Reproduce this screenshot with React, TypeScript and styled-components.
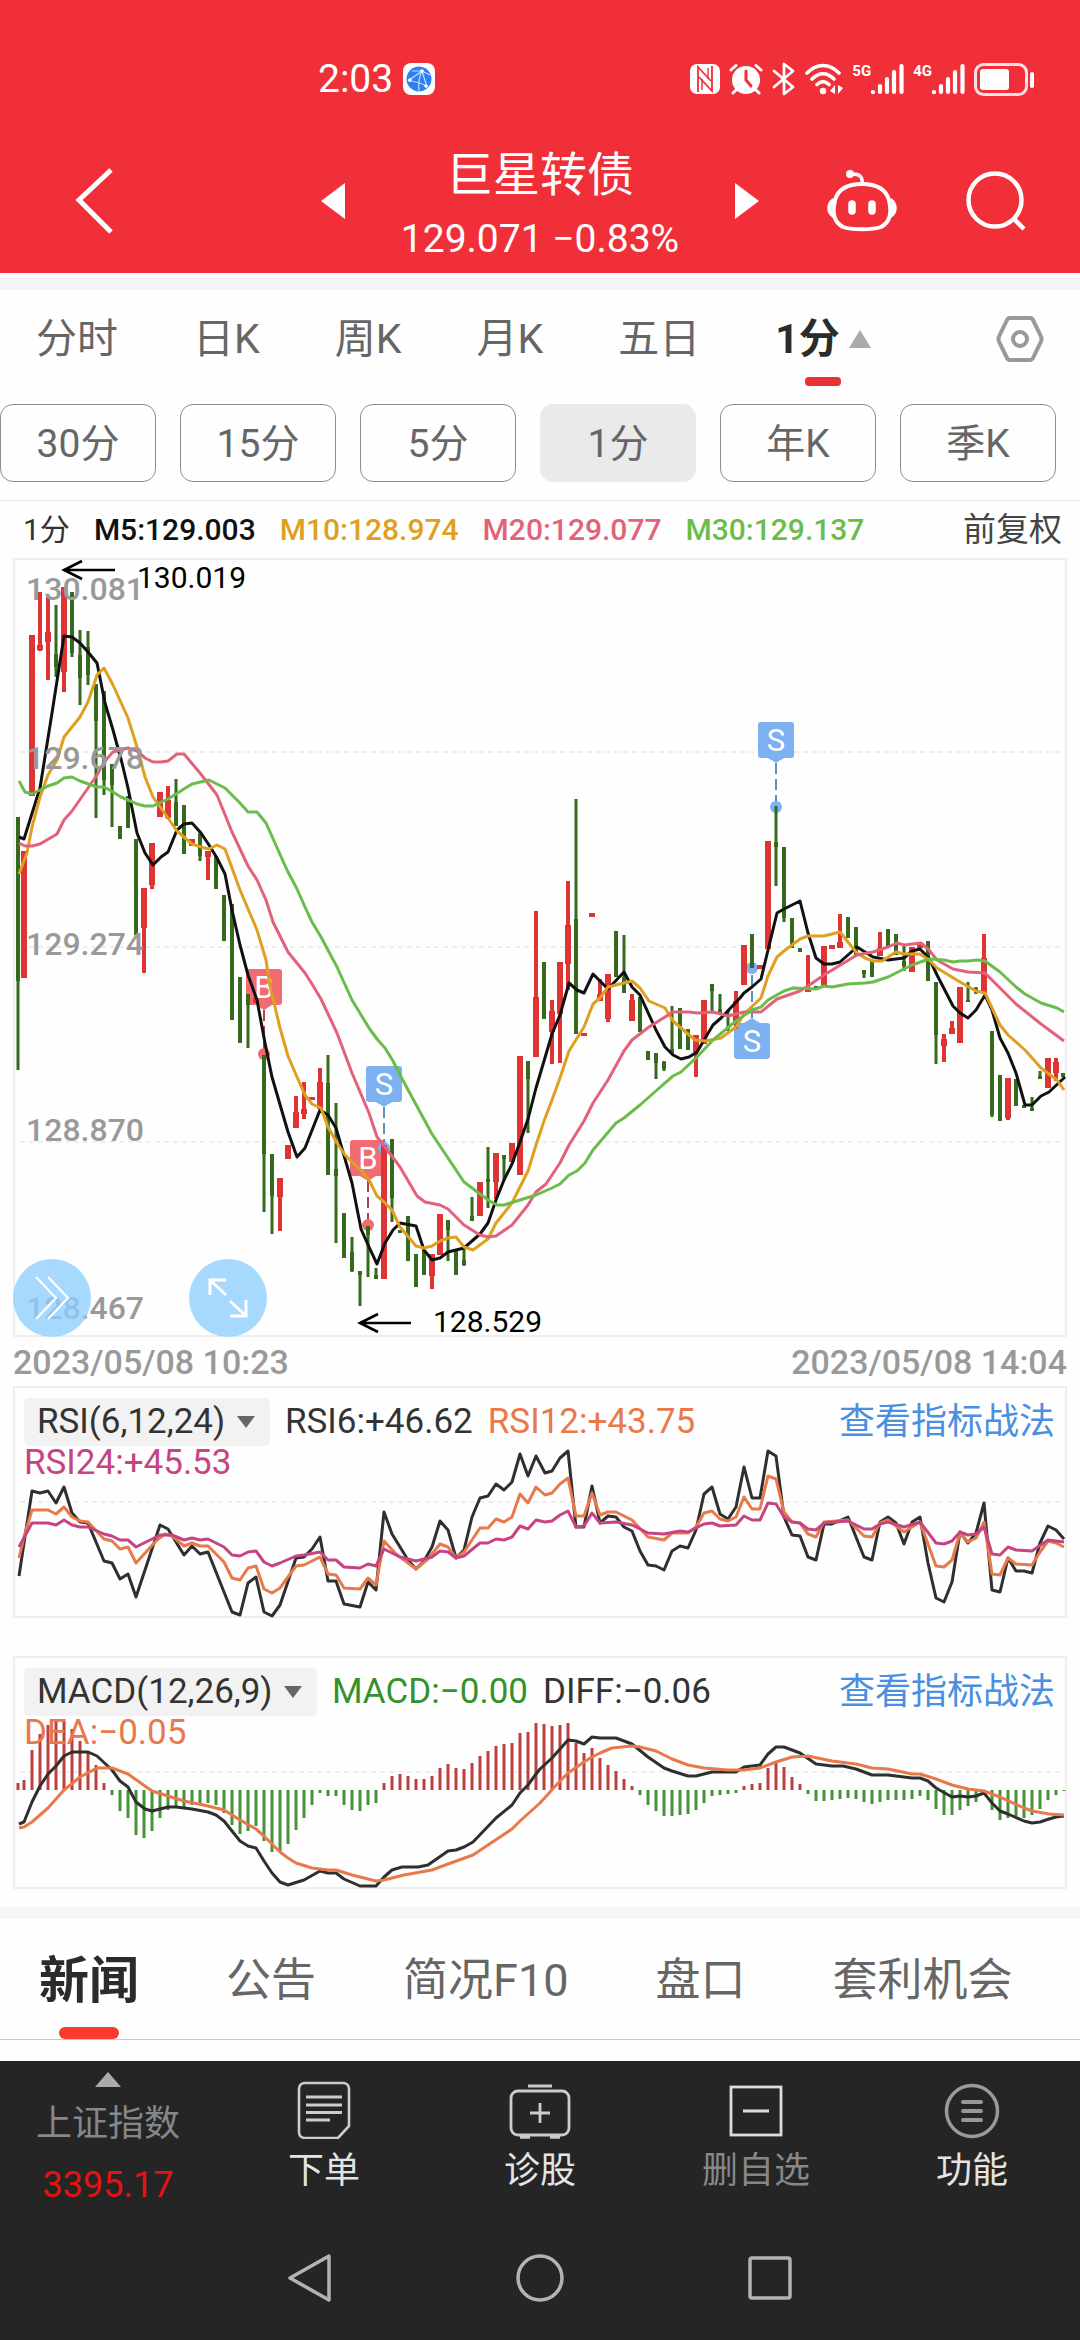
import React from 'react';
import styled, { createGlobalStyle } from 'styled-components';

const fontStack = "Roboto, 'Noto Sans CJK SC', sans-serif";

const GlobalStyle = createGlobalStyle`
  * { box-sizing: border-box; }
  body {
    margin: 0;
    background: #fefefe;
    font-family: ${fontStack};
    color: #333;
  }
  button, select { font-family: inherit; }
  svg text { font-family: ${fontStack}; }
`;

const IconButton = styled.button`
  display: flex;
  align-items: center;
  justify-content: center;
  margin: 0;
  padding: 0;
  border: 0;
  background: none;
  color: inherit;
`;

/* ---------- header ---------- */

const Header = styled.header`
  background: #f12f38;
  color: #fff;
`;

const StatusBar = styled.div`
  display: flex;
  align-items: center;
  justify-content: space-between;
  height: 128px;
  padding: 30px 45px 0 318px;
`;

const Clock = styled.div`
  display: flex;
  align-items: center;
  gap: 10px;
  font-size: 39px;
  line-height: 48px;
`;

const StatusIcons = styled.div`
  display: flex;
  align-items: center;
  gap: 9px;
`;

const Signal = styled.div`
  display: flex;
  align-items: flex-start;
  height: 32px;
`;

const SignalLabel = styled.span`
  font-size: 15px;
  line-height: 16px;
  font-weight: 700;
`;

const TitleBar = styled.div`
  display: grid;
  grid-template-columns: 1fr 438px 1fr;
  align-items: center;
  height: 145px;
`;

const BackButton = styled(IconButton)`
  justify-self: start;
  margin-left: 74px;
`;

const StockSwitcher = styled.div`
  display: flex;
  align-items: center;
  justify-content: space-between;
`;

const StockTitle = styled.div`
  padding-top: 12px;
  text-align: center;
`;

const StockName = styled.h1`
  margin: 0;
  font-size: 47px;
  line-height: 64px;
  font-weight: 400;
`;

const StockQuote = styled.p`
  margin: 0;
  font-size: 39px;
  line-height: 64px;
`;

const HeaderActions = styled.div`
  display: flex;
  align-items: center;
  justify-content: flex-end;
  gap: 68px;
  padding-right: 53px;
`;

/* ---------- period selection ---------- */

const Band = styled.div<{ $top?: number }>`
  height: 12px;
  margin-top: ${(p) => p.$top ?? 0}px;
  background: #f5f5f7;
`;

const PeriodTabs = styled.nav`
  display: flex;
  align-items: flex-start;
  gap: 75px;
  height: 114px;
  padding: 19px 36px 0;
`;

const PeriodTab = styled.button<{ $active?: boolean }>`
  display: flex;
  flex-direction: column;
  align-items: center;
  gap: 8px;
  padding: 0;
  border: 0;
  background: none;
  color: ${(p) => (p.$active ? '#2b2b2b' : '#666')};
  font-size: 41px;
  line-height: 60px;
  font-weight: ${(p) => (p.$active ? 700 : 400)};
  white-space: nowrap;

  &::after {
    content: '';
    width: 36px;
    height: 9px;
    border-radius: 4px;
    background: ${(p) => (p.$active ? '#e93037' : 'transparent')};
  }
`;

const TabLabel = styled.span`
  display: flex;
  align-items: center;
  gap: 8px;
`;

const SettingsButton = styled(IconButton)`
  height: 60px;
  margin-left: auto;
`;

const Chips = styled.div`
  display: grid;
  grid-template-columns: repeat(6, 1fr);
  gap: 24px;
  padding: 0 24px 18px 0;
  border-bottom: 1px solid #e6e6e6;
`;

const Chip = styled.button<{ $active?: boolean }>`
  height: 78px;
  padding: 2px 0 0;
  border: 1px solid ${(p) => (p.$active ? '#eaeaea' : '#8c8c8c')};
  border-radius: 13px;
  background: ${(p) => (p.$active ? '#eaeaea' : '#fefefe')};
  color: #666;
  font-size: 39px;
  line-height: 56px;
`;

/* ---------- charts ---------- */

const MaRow = styled.div`
  display: flex;
  align-items: center;
  gap: 24px;
  height: 57px;
  padding: 0 18px 0 23px;
  font-size: 30px;
  line-height: 40px;
  white-space: nowrap;
`;

const Average = styled.span<{ $color: string }>`
  color: ${(p) => p.$color};
  font-weight: 500;
`;

const Value = styled.span<{ $color: string }>`
  color: ${(p) => p.$color};
`;

const Adjust = styled(IconButton)`
  margin-left: auto;
  color: #444;
  font-size: 33px;
  line-height: 40px;
`;

const Panel = styled.section<{ $top?: number }>`
  display: grid;
  position: relative;
  margin: ${(p) => p.$top ?? 0}px 13px 0;
  border: 2px solid #eee;
`;

const Plot = styled.svg`
  grid-area: 1 / 1;
  display: block;
  width: 100%;
  height: auto;
  overflow: visible;
`;

const FloatButtons = styled.div`
  position: absolute;
  left: -2px;
  bottom: -2px;
  display: flex;
  gap: 98px;
`;

const FloatButton = styled(IconButton)`
  width: 78px;
  height: 78px;
  border-radius: 50%;
  background: rgba(142, 206, 255, 0.78);
  color: #fff;
`;

const DateRow = styled.div`
  display: flex;
  align-items: center;
  justify-content: space-between;
  height: 49px;
  margin: 0 13px;
  color: #999;
  font-size: 34px;
  line-height: 40px;
  font-weight: 500;
`;

const Legend = styled.div`
  grid-area: 1 / 1;
  align-self: start;
  z-index: 1;
  padding: 10px 10px 0 9px;
  font-size: 35px;
  white-space: nowrap;
`;

const LegendRow = styled.div`
  display: flex;
  align-items: center;
  gap: 15px;
  line-height: 48px;
`;

const LegendExtra = styled.div<{ $color: string }>`
  color: ${(p) => p.$color};
  line-height: 34px;
`;

const IndicatorPicker = styled.label`
  display: grid;
  align-items: center;
  height: 48px;
  border-radius: 5px;
  background: #f2f2f2;

  select {
    grid-area: 1 / 1;
    appearance: none;
    margin: 0;
    padding: 0 44px 0 13px;
    border: 0;
    background: none;
    color: #333;
    font-size: 35px;
    line-height: 48px;
  }

  svg {
    grid-area: 1 / 1;
    justify-self: end;
    margin-right: 14px;
    pointer-events: none;
  }
`;

const StrategyLink = styled.a`
  margin-left: auto;
  color: #4a8fe0;
  font-size: 36px;
  text-decoration: none;
`;

/* ---------- news tabs and bottom bars ---------- */

const InfoTabs = styled.nav`
  display: flex;
  gap: 87px;
  height: 121px;
  padding: 0 39px;
  border-bottom: 1px solid #c8c8c8;
`;

const InfoTab = styled.button<{ $active?: boolean }>`
  display: grid;
  grid-template-rows: 1fr 12px;
  align-items: center;
  justify-items: center;
  padding: 16px 0 0;
  border: 0;
  background: none;
  color: ${(p) => (p.$active ? '#2b2b2b' : '#666')};
  font-size: ${(p) => (p.$active ? 50 : 45)}px;
  line-height: 64px;
  font-weight: ${(p) => (p.$active ? 700 : 400)};
  white-space: nowrap;

  &::after {
    content: '';
    width: 60px;
    height: 12px;
    border-radius: 6px;
    background: ${(p) => (p.$active ? '#fa3a2f' : 'transparent')};
  }
`;

const Dock = styled.footer`
  margin-top: 21px;
  background: #252525;
`;

const DockItems = styled.div`
  display: grid;
  grid-template-columns: repeat(5, 1fr);
  height: 154px;
`;

const DockItem = styled.button<{ $muted?: boolean }>`
  display: flex;
  flex-direction: column;
  align-items: center;
  padding: 18px 0 0;
  border: 0;
  background: none;
  color: ${(p) => (p.$muted ? '#85878a' : '#e4e4e4')};
  font-size: 36px;
  line-height: 48px;
  gap: 8px;
`;

const IndexItem = styled(DockItem)`
  padding-top: 10px;
  gap: 13px;
`;

const IndexValue = styled.span`
  color: #e51212;
  font-size: 36px;
`;

const SystemNav = styled.div`
  display: flex;
  align-items: center;
  justify-content: center;
  gap: 180px;
  height: 125px;
  color: #b3b3b3;
`;

/* ---------- data ---------- */

const UP = 'r';
const DOWN = 'g';

// x, direction, wick top, wick bottom, body top, body bottom
type Candle = [number, string, number, number, number, number];

const candles: Candle[] = [
  [18, DOWN, 817, 1070, 817, 981], [24, UP, 851, 978, 851, 978], [32, UP, 635, 796, 635, 796],
  [40, UP, 592, 651, 645, 650], [48, UP, 597, 680, 632, 642], [56, DOWN, 605, 677, 654, 667],
  [64, UP, 587, 692, 587, 672], [72, DOWN, 592, 657, 592, 653], [80, DOWN, 630, 705, 655, 678],
  [88, DOWN, 631, 685, 647, 675], [96, DOWN, 684, 818, 684, 721], [104, DOWN, 691, 795, 691, 780],
  [112, DOWN, 764, 827, 764, 785], [120, DOWN, 826, 839, 826, 839], [128, DOWN, 796, 828, 796, 828],
  [136, DOWN, 839, 935, 839, 935], [144, UP, 888, 973, 888, 928], [152, UP, 843, 889, 843, 885],
  [160, UP, 792, 817, 792, 817], [168, UP, 786, 819, 800, 818], [176, DOWN, 779, 826, 802, 826],
  [184, DOWN, 805, 854, 805, 854], [192, UP, 839, 846, 839, 846], [200, DOWN, 832, 861, 834, 856],
  [208, UP, 851, 880, 851, 857], [216, DOWN, 856, 889, 856, 889], [224, DOWN, 895, 941, 895, 941],
  [232, DOWN, 904, 1020, 904, 1020], [240, DOWN, 977, 1043, 977, 1043], [248, DOWN, 994, 1048, 994, 1005],
  [256, UP, 998, 1003, 998, 1003], [264, DOWN, 1055, 1212, 1055, 1154], [272, DOWN, 1154, 1234, 1154, 1196],
  [280, UP, 1178, 1231, 1178, 1197], [288, UP, 1145, 1159, 1145, 1159], [296, UP, 1096, 1128, 1112, 1128],
  [304, UP, 1082, 1119, 1109, 1114], [312, UP, 1097, 1100, 1097, 1100], [320, UP, 1068, 1109, 1082, 1109],
  [328, DOWN, 1055, 1175, 1083, 1175], [336, DOWN, 1103, 1243, 1169, 1176], [344, DOWN, 1213, 1258, 1213, 1258],
  [352, DOWN, 1237, 1272, 1252, 1271], [360, DOWN, 1271, 1306, 1271, 1275], [368, DOWN, 1226, 1277, 1226, 1235],
  [376, DOWN, 1268, 1279, 1275, 1279], [384, UP, 1145, 1279, 1145, 1279], [392, DOWN, 1139, 1222, 1139, 1198],
  [400, DOWN, 1230, 1233, 1230, 1233], [408, DOWN, 1216, 1261, 1216, 1261], [416, DOWN, 1254, 1287, 1254, 1287],
  [424, DOWN, 1250, 1275, 1250, 1275], [432, UP, 1254, 1289, 1254, 1276], [440, UP, 1214, 1255, 1214, 1255],
  [448, DOWN, 1220, 1261, 1220, 1230], [456, DOWN, 1250, 1275, 1250, 1275], [464, DOWN, 1245, 1266, 1260, 1265],
  [472, DOWN, 1197, 1221, 1216, 1221], [480, UP, 1182, 1216, 1182, 1216], [488, DOWN, 1147, 1208, 1179, 1182],
  [496, UP, 1153, 1199, 1153, 1182], [504, DOWN, 1155, 1180, 1155, 1159], [512, UP, 1143, 1162, 1143, 1162],
  [520, UP, 1056, 1175, 1056, 1175], [528, DOWN, 1061, 1133, 1061, 1079], [536, UP, 911, 1057, 997, 1057],
  [544, DOWN, 962, 1019, 962, 1019], [552, UP, 1000, 1064, 1011, 1032], [560, UP, 962, 1063, 962, 1014],
  [568, UP, 881, 990, 925, 964], [576, DOWN, 799, 1034, 919, 1034], [584, UP, 1033, 1036, 1033, 1036],
  [592, UP, 913, 917, 913, 917], [600, UP, 979, 1001, 994, 1001], [608, UP, 974, 1022, 974, 1019],
  [616, DOWN, 931, 977, 931, 977], [624, DOWN, 935, 993, 977, 993], [632, UP, 994, 1021, 1000, 1021],
  [640, DOWN, 997, 1032, 997, 1032], [648, DOWN, 1051, 1060, 1051, 1060], [656, DOWN, 1053, 1079, 1053, 1063],
  [664, DOWN, 1061, 1071, 1062, 1069], [672, DOWN, 1006, 1054, 1049, 1053], [680, DOWN, 1008, 1049, 1008, 1049],
  [688, DOWN, 1029, 1050, 1029, 1050], [696, UP, 1035, 1077, 1035, 1052], [704, UP, 1000, 1044, 1000, 1044],
  [712, DOWN, 984, 1011, 984, 991], [720, DOWN, 994, 1013, 1009, 1013], [728, DOWN, 1010, 1031, 1010, 1012],
  [736, UP, 991, 1029, 1001, 1021], [744, UP, 945, 985, 945, 985], [752, DOWN, 934, 968, 934, 968],
  [760, UP, 965, 969, 965, 969], [768, UP, 841, 949, 841, 949], [776, DOWN, 806, 886, 842, 847],
  [784, DOWN, 847, 922, 847, 918], [792, DOWN, 918, 948, 918, 948], [800, DOWN, 948, 952, 948, 952],
  [808, UP, 955, 992, 988, 992], [816, DOWN, 986, 990, 986, 990], [824, UP, 946, 985, 946, 985],
  [832, UP, 945, 949, 945, 949], [840, UP, 914, 948, 942, 948], [848, DOWN, 917, 938, 917, 938],
  [856, DOWN, 927, 955, 927, 955], [864, DOWN, 970, 978, 970, 974], [872, DOWN, 960, 977, 960, 977],
  [880, UP, 932, 956, 948, 956], [888, DOWN, 929, 946, 929, 946], [896, DOWN, 934, 955, 934, 955],
  [904, DOWN, 946, 971, 961, 966], [912, UP, 947, 972, 947, 972], [920, UP, 943, 948, 943, 948],
  [928, DOWN, 941, 981, 941, 981], [936, DOWN, 982, 1064, 982, 1035], [944, UP, 1034, 1062, 1039, 1046],
  [952, UP, 1021, 1034, 1028, 1034], [960, UP, 987, 1043, 987, 1043], [968, DOWN, 982, 1002, 1000, 1002],
  [976, DOWN, 987, 994, 988, 993], [984, UP, 934, 993, 958, 993], [992, DOWN, 1031, 1117, 1031, 1115],
  [1000, DOWN, 1075, 1121, 1075, 1121], [1008, UP, 1078, 1120, 1078, 1118], [1016, DOWN, 1079, 1106, 1079, 1106],
  [1024, DOWN, 1105, 1108, 1105, 1108], [1032, DOWN, 1097, 1111, 1108, 1111], [1040, DOWN, 1071, 1079, 1076, 1079],
  [1048, UP, 1058, 1088, 1058, 1088], [1056, UP, 1058, 1081, 1062, 1073], [1063, DOWN, 1073, 1077, 1073, 1077],
];

const ma5 =
  '19,837 24,839 40,788 52,713 64,636 72,637 80,643 88,652 97,663 105,703 113,730 122,763 128,788 137,833 145,853 153,865 161,857 168,852 177,830 184,824 192,823 201,833 209,845 217,858 225,874 232,910 240,945 248,975 257,1000 265,1043 272,1077 288,1132 297,1157 305,1148 320,1110 328,1115 336,1128 352,1183 361,1229 369,1247 377,1264 385,1243 393,1230 400,1223 416,1226 424,1250 432,1260 440,1258 448,1252 464,1248 480,1234 488,1223 496,1200 504,1180 512,1164 520,1142 528,1119 536,1088 544,1061 552,1034 560,1015 569,983 577,990 584,993 593,974 608,989 624,972 632,987 640,995 656,1030 665,1047 673,1055 681,1059 689,1057 697,1052 713,1025 721,1018 740,998 744,993 752,987 761,979 777,913 784,909 800,901 808,933 816,958 824,964 832,964 840,962 857,947 873,957 888,960 904,958 912,951 920,949 929,958 937,975 953,1006 960,1013 968,1018 976,1010 985,995 992,1010 1000,1038 1008,1053 1016,1073 1025,1105 1032,1105 1041,1096 1049,1092 1065,1077';
const ma10 =
  '19,874 27,853 32,827 40,797 48,775 57,760 64,737 80,717 88,702 97,675 104,668 113,685 128,718 137,747 145,777 153,797 168,818 177,831 192,844 201,847 209,849 217,845 225,849 232,868 240,890 257,930 266,960 270,986 280,1028 288,1056 297,1077 305,1095 312,1104 321,1108 328,1127 337,1143 345,1155 352,1162 361,1170 369,1180 377,1196 384,1202 392,1210 400,1227 416,1246 424,1248 432,1246 440,1241 448,1238 456,1237 464,1247 473,1250 488,1239 496,1223 512,1203 528,1171 536,1145 544,1121 552,1100 560,1078 569,1051 584,1027 593,1004 600,998 608,987 616,985 632,981 640,988 649,1001 665,1008 673,1021 681,1028 695,1040 705,1041 721,1038 736,1027 744,1014 761,998 768,976 777,957 784,951 800,939 808,936 824,936 840,932 848,942 857,953 865,958 873,961 882,961 896,952 904,954 920,954 929,960 937,968 960,982 976,991 985,993 992,1008 1000,1025 1008,1035 1025,1050 1041,1068 1057,1080 1064,1090';
const ma20 =
  '19,843 25,846 32,846 40,844 57,834 64,820 72,811 88,788 97,775 104,762 113,752 128,748 137,751 145,758 153,762 161,762 168,761 177,754 184,754 200,773 217,795 232,832 248,866 257,880 266,900 273,922 288,952 305,973 312,984 321,999 337,1033 352,1073 369,1113 377,1137 385,1147 400,1167 417,1196 425,1202 440,1205 448,1209 464,1225 480,1235 488,1237 496,1236 512,1225 528,1205 536,1192 546,1184 560,1163 569,1145 584,1121 593,1103 608,1080 624,1051 632,1040 649,1027 673,1012 689,1012 697,1013 713,1012 728,1016 744,1012 761,1012 777,999 800,991 808,986 824,975 857,955 873,952 888,947 897,943 904,945 921,943 929,950 937,960 953,969 968,972 985,973 1000,988 1016,1004 1041,1024 1064,1041';
const ma30 =
  '19,781 25,792 32,794 40,790 48,786 57,783 64,778 72,777 80,781 97,787 104,787 113,792 121,797 128,800 137,804 145,806 153,806 168,799 192,784 209,780 225,788 240,803 248,812 257,812 266,823 287,870 297,889 305,907 312,922 321,937 337,967 352,1000 369,1028 377,1039 385,1048 393,1061 400,1075 432,1134 464,1182 488,1200 497,1205 504,1205 520,1200 536,1195 552,1188 560,1184 569,1175 577,1171 585,1163 593,1150 616,1123 624,1118 640,1105 657,1090 673,1076 681,1072 697,1057 713,1040 736,1021 752,1010 761,1007 768,1000 784,991 793,988 816,989 824,986 832,987 848,984 865,983 873,982 888,977 912,965 929,959 944,960 953,962 960,961 968,961 977,960 985,961 1000,972 1016,987 1025,994 1041,1003 1057,1008 1064,1012';

const rsi6 =
  '19,1576 24,1543 32,1491 40,1493 48,1491 56,1503 64,1487 72,1513 80,1522 88,1523 104,1561 112,1563 120,1579 128,1574 136,1597 160,1525 168,1529 184,1555 192,1546 200,1554 208,1552 232,1612 240,1615 248,1583 256,1577 264,1612 272,1616 280,1605 296,1558 304,1557 312,1549 320,1537 328,1581 336,1581 344,1604 360,1607 368,1582 376,1590 384,1512 392,1534 408,1560 416,1569 424,1561 432,1547 440,1521 448,1530 456,1558 464,1550 472,1517 480,1498 488,1496 496,1484 504,1490 512,1482 520,1454 528,1476 536,1456 545,1473 552,1471 560,1458 568,1451 576,1527 584,1527 592,1486 600,1523 608,1516 616,1517 624,1527 632,1531 640,1551 648,1565 656,1566 664,1570 672,1551 680,1546 688,1548 696,1530 704,1494 712,1487 720,1514 728,1519 736,1507 744,1467 752,1498 760,1498 768,1451 776,1456 784,1517 792,1535 800,1536 808,1557 816,1560 824,1524 832,1524 848,1517 864,1557 872,1560 880,1522 888,1517 896,1523 904,1544 912,1522 920,1517 928,1563 936,1598 944,1602 952,1582 960,1532 968,1543 976,1533 984,1503 992,1590 1000,1592 1008,1558 1016,1571 1024,1571 1032,1573 1040,1543 1048,1526 1056,1530 1064,1539';
const rsi12 =
  '19,1558 24,1537 32,1510 48,1510 56,1514 64,1507 72,1517 80,1521 88,1522 104,1539 112,1541 120,1549 128,1547 136,1563 157,1540 165,1534 172,1536 184,1546 192,1543 200,1546 208,1546 224,1562 232,1578 240,1580 248,1568 256,1566 264,1589 272,1593 280,1588 296,1566 304,1565 320,1557 328,1574 336,1575 344,1588 360,1589 368,1578 376,1585 384,1541 396,1554 416,1569 428,1559 440,1544 448,1547 456,1558 464,1552 480,1528 488,1528 496,1519 504,1522 512,1517 520,1494 528,1503 536,1487 545,1495 552,1493 560,1484 568,1478 576,1516 584,1516 592,1493 600,1515 608,1512 616,1512 632,1520 648,1537 664,1540 672,1533 688,1533 696,1527 704,1513 712,1511 720,1519 728,1521 736,1517 744,1497 752,1509 760,1509 768,1476 776,1479 784,1512 792,1522 800,1523 808,1534 816,1537 824,1522 848,1520 864,1536 872,1537 880,1523 888,1520 904,1532 920,1522 936,1566 944,1567 952,1560 960,1533 968,1542 976,1538 984,1522 992,1574 1000,1575 1008,1558 1016,1564 1032,1565 1040,1552 1048,1541 1056,1543 1064,1547';
const rsi24 =
  '19,1547 32,1523 48,1523 56,1525 64,1520 72,1525 80,1527 88,1527 104,1534 112,1536 120,1540 128,1540 136,1547 160,1535 172,1535 184,1540 192,1538 200,1540 208,1539 224,1547 232,1555 240,1556 248,1552 256,1551 264,1562 272,1566 280,1563 296,1556 304,1555 320,1552 328,1560 336,1560 344,1567 360,1568 368,1564 376,1566 384,1549 400,1557 416,1561 432,1557 440,1551 448,1552 456,1558 464,1556 480,1543 488,1543 496,1539 504,1540 512,1537 520,1526 528,1529 536,1520 545,1522 552,1521 560,1515 568,1511 576,1527 584,1526 592,1513 600,1523 616,1522 632,1525 648,1533 664,1534 680,1531 688,1532 704,1524 712,1523 720,1526 736,1525 744,1516 752,1520 760,1520 768,1503 776,1504 784,1517 792,1522 800,1523 808,1529 816,1530 824,1523 848,1521 864,1529 872,1529 880,1524 888,1522 904,1527 920,1522 936,1543 944,1544 952,1541 960,1532 968,1535 976,1534 984,1527 992,1554 1000,1555 1008,1547 1016,1550 1032,1551 1048,1540 1064,1542';

// one histogram bar per minute, positive above the zero line
const macdBars = [
  7, 10, 40, 56, 65, 69, 69, 61, 49, 37, 25, 7, -5, -21, -28, -45, -48, -41, -28, -20, -16, -18, -15, -13, -13, -15,
  -23, -35, -44, -41, -36, -51, -62, -62, -54, -40, -28, -15, -3, -6, -6, -15, -20, -21, -15, -13, 7, 14, 16, 14, 11,
  11, 14, 22, 26, 22, 21, 27, 34, 39, 44, 46, 47, 57, 58, 67, 66, 64, 65, 67, 47, 37, 42, 32, 25, 19, 11, 4, -5, -15,
  -21, -26, -26, -25, -24, -20, -13, -6, -5, -4, -3, 4, 6, 7, 22, 27, 23, 13, 6, -4, -11, -11, -10, -9, -8, -9, -12,
  -14, -12, -10, -10, -10, -9, -6, -10, -19, -25, -25, -20, -16, -12, -3, -20, -30, -28, -26, -28, -25, -19, -10, -5,
  -1,
];

const diff =
  '19,1824 24,1822 32,1802 40,1786 48,1774 56,1766 64,1756 72,1752 88,1752 97,1756 112,1770 120,1781 128,1787 136,1802 145,1809 152,1811 168,1807 176,1807 192,1809 208,1812 216,1815 224,1821 240,1841 248,1846 256,1848 264,1861 272,1873 280,1882 288,1885 304,1880 320,1871 328,1873 336,1873 344,1879 360,1886 376,1886 384,1877 392,1870 402,1867 418,1867 428,1865 448,1851 456,1850 464,1847 473,1842 496,1818 512,1805 520,1793 528,1785 536,1774 540,1769 552,1758 560,1749 568,1740 576,1741 584,1744 592,1737 600,1738 616,1738 632,1744 648,1757 664,1768 672,1771 688,1776 696,1776 712,1772 736,1772 744,1767 760,1765 768,1754 776,1747 784,1747 800,1753 816,1764 832,1766 843,1766 856,1769 872,1775 888,1775 912,1778 920,1778 928,1781 936,1788 952,1797 960,1796 968,1797 976,1796 984,1793 992,1803 1000,1811 1008,1814 1024,1821 1032,1823 1040,1822 1049,1819 1056,1817 1064,1816';
const dea =
  '19,1828 24,1827 32,1822 48,1808 64,1790 80,1777 97,1768 112,1768 128,1774 145,1786 152,1791 168,1796 184,1801 208,1806 224,1810 240,1820 256,1829 264,1836 280,1852 288,1858 296,1863 312,1868 328,1870 336,1870 352,1875 376,1881 384,1880 404,1875 432,1870 448,1864 473,1855 488,1845 512,1829 520,1821 540,1803 560,1781 568,1773 584,1762 592,1757 600,1753 612,1748 632,1746 640,1747 656,1751 672,1759 688,1765 704,1768 728,1770 744,1770 760,1768 776,1762 792,1757 808,1756 832,1761 856,1764 872,1768 888,1769 912,1774 920,1774 936,1779 952,1785 968,1789 984,1791 1000,1797 1024,1808 1032,1811 1049,1814 1064,1815';

const priceLabels = [
  { text: '130.081', y: 600 },
  { text: '129.678', y: 769 },
  { text: '129.274', y: 955 },
  { text: '128.870', y: 1141 },
  { text: '128.467', y: 1319 },
];

// x, top of the flag, y of the traded price
const trades = [
  { side: 'B', x: 264, top: 969, price: 1054 },
  { side: 'B', x: 368, top: 1140, price: 1225 },
  { side: 'S', x: 384, top: 1066, price: 1148 },
  { side: 'S', x: 776, top: 722, price: 807 },
  { side: 'S', x: 752, top: 1023, price: 968 },
];

const periods = ['分时', '日K', '周K', '月K', '五日'];
const chips = ['30分', '15分', '5分', '1分', '年K', '季K'];
const averages = [
  { text: 'M5:129.003', color: '#111' },
  { text: 'M10:128.974', color: '#dfa021' },
  { text: 'M20:129.077', color: '#e3627b' },
  { text: 'M30:129.137', color: '#6abd4a' },
];
const infoTabs = ['新闻', '公告', '简况F10', '盘口', '套利机会'];

/* ---------- chart parts ---------- */

const Line = ({ points, color }: { points: string; color: string }) => (
  <polyline points={points} fill="none" stroke={color} strokeWidth="3" strokeLinejoin="round" />
);

const GridLine = ({ y }: { y: number }) => (
  <line x1="20" x2="1064" y1={y} y2={y} stroke="#e9e9e9" strokeWidth="1.5" strokeDasharray="5 4" />
);

const TradeFlag = ({ side, x, top, price }: { side: string; x: number; top: number; price: number }) => {
  const fill = side === 'B' ? '#f06c70' : '#7db1f1';
  const stroke = side === 'B' ? '#b0404f' : '#5b93bd';
  const below = price < top;
  const tip = below ? top - 5 : top + 41;
  const base = below ? top : top + 36;
  return (
    <g>
      <line x1={x} x2={x} y1={tip} y2={price} stroke={stroke} strokeWidth="2" strokeDasharray="11 5" />
      <circle cx={x} cy={price} r="6" fill={fill} />
      <rect x={x - 18} y={top} width="36" height="36" rx="3" fill={fill} />
      <path d={`M${x - 8} ${base}L${x} ${tip}L${x + 8} ${base}Z`} fill={fill} />
      <text x={x} y={top + 29} fontSize="31" fill="#fff" textAnchor="middle">
        {side}
      </text>
    </g>
  );
};

const Extreme = ({ x, y, baseline, text }: { x: number; y: number; baseline: number; text: string }) => (
  <g>
    <path d={`M${x + 18} ${y - 9}L${x} ${y}L${x + 18} ${y + 9}M${x} ${y}H${x + 51}`} fill="none" stroke="#000" strokeWidth="2.6" />
    <text x={x + 73} y={baseline} fontSize="30" fill="#000">
      {text}
    </text>
  </g>
);

const PriceChart = () => (
  <Plot viewBox="15 560 1050 775" role="img" aria-label="1分K线图">
    {[752, 947, 1142].map((y) => (
      <GridLine key={y} y={y} />
    ))}
    {trades.map((t) => (
      <TradeFlag key={`${t.side}${t.x}`} {...t} />
    ))}
    {candles.map(([x, dir, high, low, top, bottom]) => {
      const up = dir === UP;
      const wick = up ? 4 : 3;
      const body = up ? 6 : 4;
      return (
        <g key={x} fill={up ? '#de3434' : '#356a1e'}>
          <rect x={x - wick / 2} y={high} width={wick} height={low - high} />
          <rect x={x - body / 2} y={top} width={body} height={bottom - top} />
        </g>
      );
    })}
    <Line points={ma5} color="#111" />
    <Line points={ma10} color="#dfa021" />
    <Line points={ma20} color="#e3627b" />
    <Line points={ma30} color="#6abd4a" />
    {priceLabels.map((l) => (
      <text key={l.text} x="26" y={l.y} fontSize="32" fontWeight="500" fill="#999">
        {l.text}
      </text>
    ))}
    <Extreme x={64} y={570} baseline={588} text="130.019" />
    <Extreme x={360} y={1323} baseline={1332} text="128.529" />
  </Plot>
);

const RsiChart = () => (
  <Plot viewBox="15 1388 1050 228" role="img" aria-label="RSI">
    <GridLine y={1502} />
    <Line points={rsi6} color="#2f2f2f" />
    <Line points={rsi12} color="#e8794a" />
    <Line points={rsi24} color="#c64482" />
  </Plot>
);

const MacdChart = () => (
  <Plot viewBox="15 1658 1050 229" role="img" aria-label="MACD">
    <GridLine y={1772} />
    {macdBars.map((value, i) => {
      const x = i === 0 ? 18 : 16 + 8 * i;
      return (
        <rect
          key={x}
          x={x - 1.5}
          y={value > 0 ? 1790 - value : 1790}
          width="3"
          height={Math.abs(value)}
          fill={value > 0 ? '#bd4040' : '#46913a'}
        />
      );
    })}
    <Line points={diff} color="#2f2f2f" />
    <Line points={dea} color="#e8794a" />
  </Plot>
);

const Picker = ({ name }: { name: string }) => (
  <IndicatorPicker>
    <select aria-label="指标">
      <option>{name}</option>
    </select>
    <svg width="20" height="14" viewBox="0 0 20 14">
      <path d="M1 1H19L10 13Z" fill="#666" />
    </svg>
  </IndicatorPicker>
);

/* ---------- icons ---------- */

const GlobeIcon = () => (
  <svg width="32" height="32" viewBox="0 0 32 32">
    <rect width="32" height="32" rx="8" fill="#fff" />
    <circle cx="16" cy="16" r="12.5" fill="#2f80ee" />
    <path d="M5 18L19 8L24 24M5 18C12 18 20 21 25 24M19 8C16 14 15 20 16 28M9 8L19 8L27 12" fill="none" stroke="#bfe0ff" strokeWidth="1.2" />
    <circle cx="19" cy="8" r="1.8" fill="#fff" />
    <circle cx="7" cy="17" r="1.8" fill="#fff" />
    <circle cx="23" cy="23" r="1.8" fill="#fff" />
  </svg>
);

const NfcIcon = () => (
  <svg width="30" height="30" viewBox="0 0 30 30">
    <rect width="30" height="30" rx="7" fill="#fff" />
    <path d="M8 28V3L21 17M22 2V27L9 13" fill="none" stroke="#f12f38" strokeWidth="1.8" />
    <path d="M12 15V26M18 4V15" stroke="#f12f38" strokeWidth="1.4" />
  </svg>
);

const AlarmIcon = () => (
  <svg width="34" height="32" viewBox="0 0 34 32">
    <circle cx="17" cy="17" r="14" fill="#fff" />
    <path d="M2 7L7 2.500M32 7L27 2.500M7 27L4 30M27 27L30 30" stroke="#fff" strokeWidth="3" strokeLinecap="round" />
    <path d="M17 8V17L22 23" fill="none" stroke="#f12f38" strokeWidth="3" strokeLinecap="round" />
  </svg>
);

const BluetoothIcon = () => (
  <svg width="24" height="34" viewBox="0 0 24 34">
    <path d="M2 9L21 25L12 32V2L21 9L2 25" fill="none" stroke="#fff" strokeWidth="2.800" strokeLinejoin="round" strokeLinecap="round" />
  </svg>
);

const WifiIcon = () => (
  <svg width="38" height="32" viewBox="0 0 38 32">
    <path d="M2 10C12 0 24 0 34 10M7 16C14 9 22 9 29 16M12 21.500C16 17.500 20 17.500 24 21.500" fill="none" stroke="#fff" strokeWidth="3.600" strokeLinecap="round" />
    <circle cx="18" cy="28" r="3.200" fill="#fff" />
    <path d="M25 28L30 22V31M33 22V31L38 25" fill="#fff" />
  </svg>
);

const BarsIcon = () => (
  <svg width="33" height="32" viewBox="1 0 33 32">
    <path d="M3 29V29.200M10 23V29M17 16V29M24 9V29M31.500 3V29" stroke="#fff" strokeWidth="4.200" strokeLinecap="round" />
  </svg>
);

const BatteryIcon = () => (
  <svg width="61" height="33" viewBox="0 0 61 33">
    <rect x="1.500" y="1.500" width="51" height="30" rx="8" fill="none" stroke="#fff" strokeOpacity=".85" strokeWidth="3" />
    <rect x="6" y="6" width="29" height="21" rx="3" fill="#fff" />
    <rect x="56" y="9" width="4" height="16" rx="2" fill="#fff" />
  </svg>
);

const Arrow = ({ flip }: { flip?: boolean }) => (
  <svg width="24" height="36" viewBox="0 0 24 36">
    <path d={flip ? 'M0 0L24 18L0 36Z' : 'M24 0L0 18L24 36Z'} fill="#fff" />
  </svg>
);

const RobotIcon = () => (
  <svg width="70" height="66" viewBox="0 0 70 66" fill="none" stroke="#fff">
    <path d="M35 16C45 16 58 18 62 32C65 46 63 54 54 59C46 62 24 62 16 59C7 54 5 46 8 32C12 18 25 16 35 16Z" strokeWidth="4" />
    <path d="M35 16C36 8 32 6 25 6" strokeWidth="3.500" />
    <circle cx="23" cy="6" r="4" fill="#fff" stroke="none" />
    <path d="M5 32C0 36 0 44 5 48ZM65 32C70 36 70 44 65 48Z" fill="#fff" strokeWidth="2" />
    <path d="M25 36V43M45 36V43" strokeWidth="7.500" strokeLinecap="round" />
  </svg>
);

const SearchIcon = () => (
  <svg width="62" height="62" viewBox="0 0 62 62" fill="none" stroke="#fff" strokeWidth="4.500">
    <circle cx="30" cy="30" r="26.500" />
    <path d="M48 48L59 59" />
  </svg>
);

const GearIcon = () => (
  <svg width="48" height="48" viewBox="0 0 48 48" fill="none" stroke="#999" strokeWidth="4">
    <path d="M14 3H34Q36 3 37 5L45 21.500Q46 24 45 26.500L37 43Q36 45 34 45H14Q12 45 11 43L3 26.500Q2 24 3 21.500L11 5Q12 3 14 3Z" />
    <circle cx="24" cy="24" r="7" />
  </svg>
);

const OrderIcon = () => (
  <svg width="60" height="60" viewBox="0 0 60 60" fill="none" stroke="#ccc" strokeWidth="2.600">
    <path d="M10 4H50Q55 5 55 10V47L44 59H10Q5 58 5 53V10Q5 5 10 4Z" />
    <path d="M12 18H48M12 26H48M12 33.500H48M12 41H36" strokeWidth="3" />
  </svg>
);

const DiagnoseIcon = () => (
  <svg width="64" height="60" viewBox="0 0 64 60" fill="none" stroke="#ccc" strokeWidth="2.800">
    <rect x="3" y="12" width="58" height="44" rx="7" />
    <path d="M20 7H44M32 24V44M22 34H42" />
    <path d="M12 58H22M42 58H52" strokeWidth="3.500" />
  </svg>
);

const RemoveIcon = () => (
  <svg width="60" height="60" viewBox="0 0 60 60" fill="none" stroke="#ddd" strokeWidth="2.800">
    <rect x="5" y="8" width="50" height="48" />
    <path d="M17 32H43" strokeWidth="3" />
  </svg>
);

const FunctionIcon = () => (
  <svg width="60" height="60" viewBox="0 0 60 60" fill="none" stroke="#999">
    <circle cx="30" cy="32" r="25.500" strokeWidth="3.500" />
    <path d="M21 23H39M21 32H39M21 41H39" strokeWidth="4" strokeLinecap="round" />
  </svg>
);

export default function App() {
  return (
    <>
      <GlobalStyle />
      <Header>
        <StatusBar>
          <Clock>
            2:03
            <GlobeIcon />
          </Clock>
          <StatusIcons>
            <NfcIcon />
            <AlarmIcon />
            <BluetoothIcon />
            <WifiIcon />
            <Signal>
              <SignalLabel>5G</SignalLabel>
              <BarsIcon />
            </Signal>
            <Signal>
              <SignalLabel>4G</SignalLabel>
              <BarsIcon />
            </Signal>
            <BatteryIcon />
          </StatusIcons>
        </StatusBar>
        <TitleBar>
          <BackButton aria-label="返回">
            <svg width="40" height="66" viewBox="0 0 40 66">
              <path d="M37 2L5 32L37 64" fill="none" stroke="#fff" strokeWidth="5" />
            </svg>
          </BackButton>
          <StockSwitcher>
            <IconButton aria-label="上一只">
              <Arrow />
            </IconButton>
            <StockTitle>
              <StockName>巨星转债</StockName>
              <StockQuote>129.071 −0.83%</StockQuote>
            </StockTitle>
            <IconButton aria-label="下一只">
              <Arrow flip />
            </IconButton>
          </StockSwitcher>
          <HeaderActions>
            <IconButton aria-label="智能助手">
              <RobotIcon />
            </IconButton>
            <IconButton aria-label="搜索">
              <SearchIcon />
            </IconButton>
          </HeaderActions>
        </TitleBar>
      </Header>

      <Band $top={5} />
      <PeriodTabs>
        {periods.map((p) => (
          <PeriodTab key={p}>{p}</PeriodTab>
        ))}
        <PeriodTab $active>
          <TabLabel>
            1分
            <svg width="24" height="20" viewBox="0 0 24 20">
              <path d="M12 1L23 19H1Z" fill="#aaa" />
            </svg>
          </TabLabel>
        </PeriodTab>
        <SettingsButton aria-label="设置">
          <GearIcon />
        </SettingsButton>
      </PeriodTabs>
      <Chips>
        {chips.map((c) => (
          <Chip key={c} $active={c === '1分'}>
            {c}
          </Chip>
        ))}
      </Chips>

      <MaRow>
        <span>1分</span>
        {averages.map((a) => (
          <Average key={a.text} $color={a.color}>
            {a.text}
          </Average>
        ))}
        <Adjust>前复权</Adjust>
      </MaRow>
      <Panel>
        <PriceChart />
        <FloatButtons>
          <FloatButton aria-label="展开">
            <svg width="36" height="44" viewBox="0 0 36 44" fill="none" stroke="currentColor" strokeWidth="2.200">
              <path d="M2 1L22 22L2 43M14 1L34 22L14 43" />
            </svg>
          </FloatButton>
          <FloatButton aria-label="全屏">
            <svg width="40" height="40" viewBox="0 0 40 40" fill="none" stroke="currentColor" strokeWidth="3">
              <path d="M2 17V2H18M2 2L18 17M22 23L38 38M38 22V38H22" />
            </svg>
          </FloatButton>
        </FloatButtons>
      </Panel>
      <DateRow>
        <span>2023/05/08 10:23</span>
        <span>2023/05/08 14:04</span>
      </DateRow>

      <Panel>
        <RsiChart />
        <Legend>
          <LegendRow>
            <Picker name="RSI(6,12,24)" />
            <Value $color="#333">RSI6:+46.62</Value>
            <Value $color="#e8794a">RSI12:+43.75</Value>
            <StrategyLink href="#rsi">查看指标战法</StrategyLink>
          </LegendRow>
          <LegendExtra $color="#c64482">RSI24:+45.53</LegendExtra>
        </Legend>
      </Panel>

      <Panel $top={38}>
        <MacdChart />
        <Legend>
          <LegendRow>
            <Picker name="MACD(12,26,9)" />
            <Value $color="#35912a">MACD:−0.00</Value>
            <Value $color="#333">DIFF:−0.06</Value>
            <StrategyLink href="#macd">查看指标战法</StrategyLink>
          </LegendRow>
          <LegendExtra $color="#e8794a">DEA:−0.05</LegendExtra>
        </Legend>
      </Panel>

      <Band $top={18} />
      <InfoTabs>
        {infoTabs.map((t, i) => (
          <InfoTab key={t} $active={i === 0}>
            {t}
          </InfoTab>
        ))}
      </InfoTabs>

      <Dock>
        <DockItems>
          <IndexItem $muted>
            <svg width="28" height="16" viewBox="0 0 28 16">
              <path d="M14 1L27 16H1Z" fill="#aaa" />
            </svg>
            <span>上证指数</span>
            <IndexValue>3395.17</IndexValue>
          </IndexItem>
          <DockItem>
            <OrderIcon />
            下单
          </DockItem>
          <DockItem>
            <DiagnoseIcon />
            诊股
          </DockItem>
          <DockItem $muted>
            <RemoveIcon />
            删自选
          </DockItem>
          <DockItem>
            <FunctionIcon />
            功能
          </DockItem>
        </DockItems>
        <SystemNav>
          <IconButton aria-label="系统返回">
            <svg width="50" height="50" viewBox="0 0 50 50" fill="none" stroke="currentColor" strokeWidth="3.500" strokeLinejoin="round">
              <path d="M44 3V47L5 25Z" />
            </svg>
          </IconButton>
          <IconButton aria-label="主屏幕">
            <svg width="50" height="50" viewBox="0 0 50 50" fill="none" stroke="currentColor" strokeWidth="3.500">
              <circle cx="25" cy="25" r="22" />
            </svg>
          </IconButton>
          <IconButton aria-label="最近任务">
            <svg width="50" height="50" viewBox="0 0 50 50" fill="none" stroke="currentColor" strokeWidth="3.500">
              <rect x="5" y="5" width="40" height="40" rx="2" />
            </svg>
          </IconButton>
        </SystemNav>
      </Dock>
    </>
  );
}
